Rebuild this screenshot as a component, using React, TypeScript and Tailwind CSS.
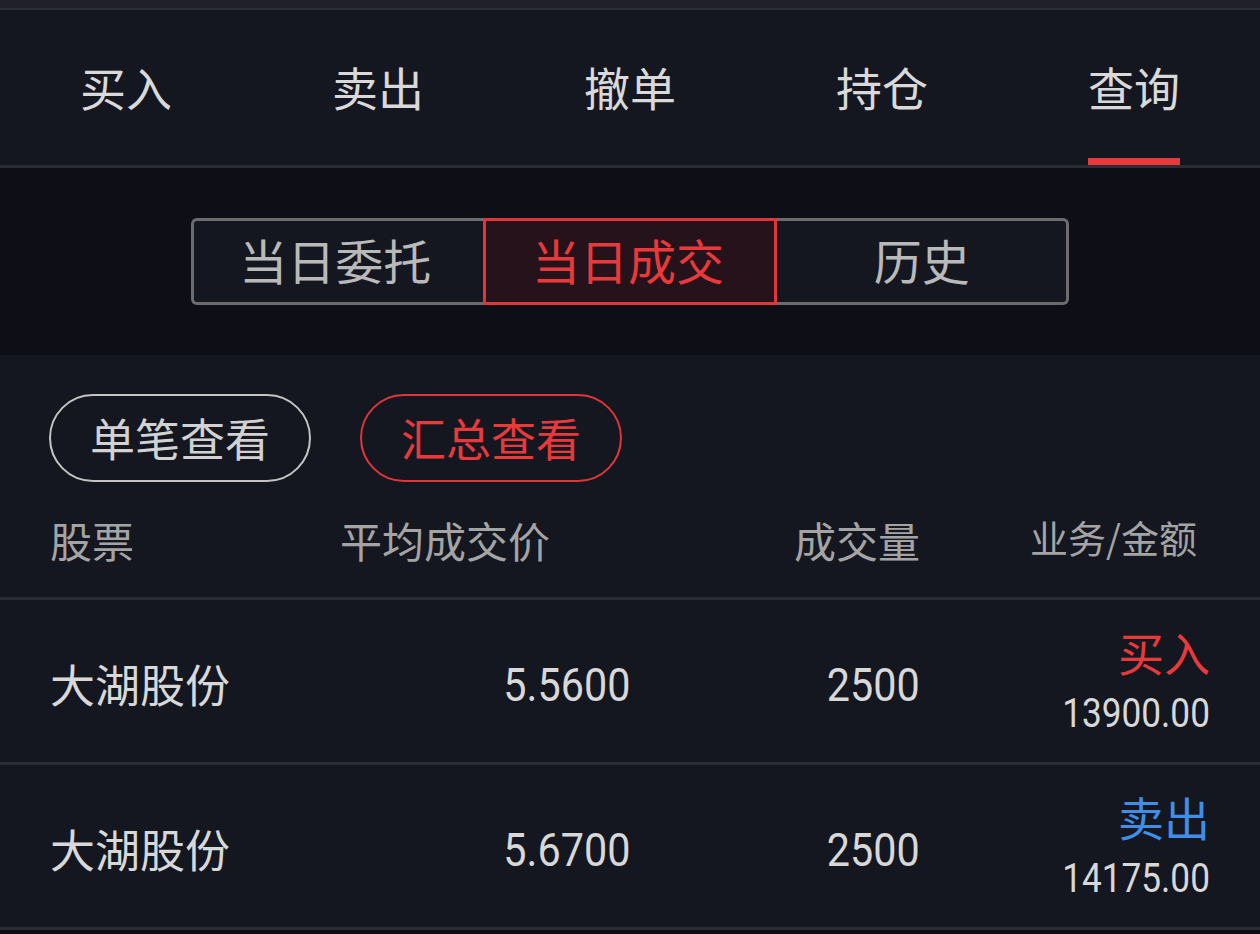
import React from "react";

const CJK = { fontFamily: '"Noto Sans CJK SC", "Noto Sans", sans-serif' };
const NUM = { fontFamily: 'Roboto, "Noto Sans CJK SC", sans-serif' };

const tabs = ["买入", "卖出", "撤单", "持仓", "查询"];

const rows = [
  { name: "大湖股份", price: "5.5600", vol: "2500", side: "买入", sideColor: "text-[#e8393b]", amt: "13900.00" },
  { name: "大湖股份", price: "5.6700", vol: "2500", side: "卖出", sideColor: "text-[#3f8fe8]", amt: "14175.00" },
];

export default function App() {
  return (
    <div className="w-[1260px] h-[934px] bg-[#0d0e16] overflow-hidden" style={CJK}>
      {/* top strip */}
      <div className="h-[10px] bg-[#1f2029] border-b-[2px] border-[#2b2c35]" />

      {/* main tabs */}
      <div className="h-[158px] bg-[#151720] border-b-[3px] border-[#2b2c35] grid grid-cols-5">
        {tabs.map((t, i) => (
          <div key={t} className="relative flex items-center justify-center">
            <span className="text-[46px] leading-none text-[#d9d9d9] -mt-[4px]">{t}</span>
            {i === 4 && (
              <div className="absolute bottom-0 left-1/2 -translate-x-1/2 w-[92px] h-[7px] bg-[#e8393b]" />
            )}
          </div>
        ))}
      </div>

      {/* segmented */}
      <div className="h-[187px] bg-[#0d0e16] flex items-center justify-center">
        <div className="flex w-[878px] h-[87px]">
          <div className="flex-1 flex items-center justify-center border-[3px] border-r-0 border-[#6c6c6f] rounded-l-[6px] bg-[#151720]">
            <span className="text-[48px] leading-none text-[#b9b9b9] -mt-[6px] ml-[-6px]">当日委托</span>
          </div>
          <div className="flex-1 flex items-center justify-center border-[3px] border-[#e2353a] bg-[#26121a]">
            <span className="text-[48px] leading-none text-[#e8393b] -mt-[6px] ml-[-4px]">当日成交</span>
          </div>
          <div className="flex-1 flex items-center justify-center border-[3px] border-l-0 border-[#6c6c6f] rounded-r-[6px] bg-[#151720]">
            <span className="text-[48px] leading-none text-[#b9b9b9] -mt-[6px]">历史</span>
          </div>
        </div>
      </div>

      {/* content */}
      <div className="bg-[#151720]">
        <div className="pt-[39px] px-[49px] flex gap-[49px]">
          <div className="w-[262px] h-[88px] rounded-full border-2 border-[#c4c4c4] flex items-center justify-center">
            <span className="text-[45px] leading-none text-[#d2d2d2] -mt-[2px]">单笔查看</span>
          </div>
          <div className="w-[262px] h-[88px] rounded-full border-2 border-[#e2353a] flex items-center justify-center">
            <span className="text-[45px] leading-none text-[#e8393b] -mt-[2px]">汇总查看</span>
          </div>
        </div>

        {/* header */}
        <div className="h-[118px] px-[50px] grid grid-cols-4 items-center border-b-[3px] border-[#2b2c35] text-[#a4a4a4] text-[42px] leading-none">
          <div>股票</div>
          <div>平均成交价</div>
          <div className="text-right">成交量</div>
          <div className="text-right pr-[13px] text-[38px] -mt-[6px]">业务/金额</div>
        </div>

        {rows.map((r, i) => (
          <div
            key={i}
            className="h-[165px] px-[50px] grid grid-cols-4 items-center border-b-[3px] border-[#2b2c35]"
          >
            <div className="text-[45px] leading-none text-[#d8d8d8] pt-[4px]">{r.name}</div>
            <div className="flex justify-end pt-[6px]">
              <span className="text-[47px] leading-none text-[#d8d8d8] scale-x-[0.88] origin-right" style={NUM}>
                {r.price}
              </span>
            </div>
            <div className="flex justify-end pt-[6px]">
              <span className="text-[47px] leading-none text-[#d8d8d8] scale-x-[0.88] origin-right" style={NUM}>
                {r.vol}
              </span>
            </div>
            <div className="flex flex-col items-end gap-[20px]">
              <span className={`text-[46px] leading-none ${r.sideColor}`}>{r.side}</span>
              <span className="text-[40px] leading-none text-[#d8d8d8] scale-x-[0.88] origin-right" style={NUM}>
                {r.amt}
              </span>
            </div>
          </div>
        ))}
      </div>
    </div>
  );
}
